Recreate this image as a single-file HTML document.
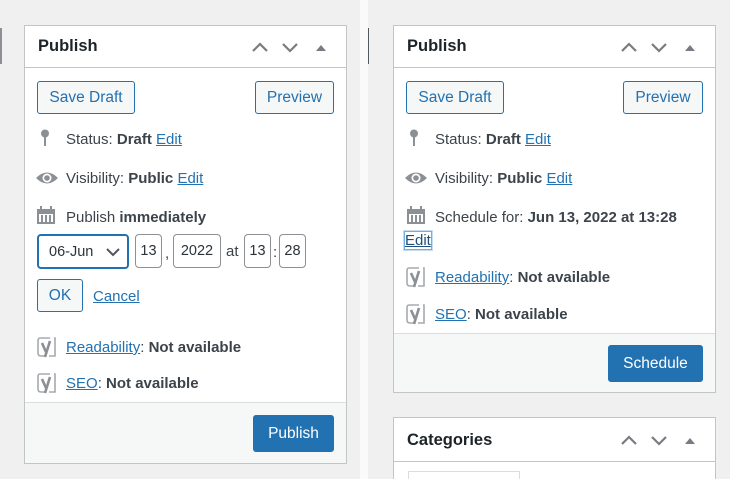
<!DOCTYPE html>
<html style="overflow:hidden;height:479px"><head><style>
*{box-sizing:border-box;margin:0;padding:0}
body{width:730px;height:479px;background:#f0f0f1;position:relative;overflow:hidden;font-family:"Liberation Sans",sans-serif;font-size:15px;color:#3c434a}
.a{position:absolute}
.panel{position:absolute;background:#fff;border:1px solid #c3c4c7}
.hdr{position:absolute;left:0;right:0;top:0;height:42px;border-bottom:1px solid #c3c4c7}
.hdr b{position:absolute;left:13px;top:11px;font-size:16.5px;color:#1d2327}
.foot{position:absolute;left:0;right:0;bottom:0;background:#f6f7f7;border-top:1px solid #dcdcde}
.btn{position:absolute;border:1px solid #2271b1;border-radius:3px;background:#f6f7f7;color:#2271b1;font-size:15.5px;display:flex;align-items:center;justify-content:center}
.pri{position:absolute;background:#2271b1;color:#fff;border-radius:3px;font-size:15.5px;display:flex;align-items:center;justify-content:center}
.t{position:absolute;white-space:nowrap;font-size:15px}
a{color:#2271b1;text-decoration:underline}
.inp{position:absolute;border:1px solid #8c8f94;border-radius:4px;font-size:14.5px;text-align:center;line-height:32px;height:34px;top:234px;color:#2c3338}
</style></head><body>
<div class="a" style="left:360px;top:0;width:8px;height:479px;background:#fafafa"></div>
<div class="a" style="left:0;top:28px;width:2px;height:36px;background:#8c8f94"></div>
<div class="a" style="left:368px;top:28px;width:1px;height:36px;background:#50575e"></div>

<svg width="0" height="0" style="position:absolute">
<defs>
<g id="ctl" fill="none" stroke="#787c82" stroke-width="2.2"><path d="M0 8 L7 1 L14 8"/><path d="M30 1 L37 8 L44 1"/><path d="M63 8 L68 2 L73 8Z" fill="#787c82" stroke="none"/></g>
<g id="pin" fill="#8c8f94"><circle cx="5" cy="4.5" r="4"/><rect x="4" y="6" width="2" height="11"/></g>
<g id="eye"><path d="M0 8 Q11 -3 22 8 Q11 19 0 8Z" fill="#8c8f94"/><circle cx="11" cy="8" r="4.5" fill="#fff"/><circle cx="11" cy="8" r="2.8" fill="#8c8f94"/></g>
<g id="cal" fill="#8c8f94"><rect x="0" y="3" width="18" height="15"/><rect x="3" y="0" width="2" height="5"/><rect x="13" y="0" width="2" height="5"/><rect x="2" y="8" width="14" height="8" fill="#fff"/><rect x="4" y="9" width="2" height="7"/><rect x="8" y="9" width="2" height="7"/><rect x="12" y="9" width="2" height="7"/></g>
<g id="yo"><path d="M3 1 H13 M3 1 Q1 1 1 4 V16 Q1 19 4 19 H9" fill="none" stroke="#a7aaad" stroke-width="1.6"/><path d="M17 1 L18 1 L18 19 L12 19" fill="none" stroke="#a7aaad" stroke-width="1.6"/><path d="M5 6 L9 15 M13 4 L8 20" fill="none" stroke="#8c8f94" stroke-width="2.6"/></g>
</defs></svg>

<!-- LEFT PANEL -->
<div class="panel" style="left:24px;top:25px;width:323px;height:439px">
  <div class="hdr"><b>Publish</b><svg class="a" style="left:227px;top:16px" width="80" height="11"><use href="#ctl" x="1" y="1"/></svg></div>
  <div class="foot" style="height:61px"></div>
</div>
<div class="btn" style="left:37px;top:81px;width:98px;height:33px">Save Draft</div>
<div class="btn" style="left:255px;top:81px;width:79px;height:33px">Preview</div>
<svg class="a" style="left:40px;top:129px" width="12" height="18"><use href="#pin"/></svg>
<div class="t" style="left:66px;top:131px">Status: <b>Draft</b> <a>Edit</a></div>
<svg class="a" style="left:36px;top:170px" width="24" height="17"><use href="#eye"/></svg>
<div class="t" style="left:66px;top:170px">Visibility: <b>Public</b> <a>Edit</a></div>
<svg class="a" style="left:37px;top:206px" width="19" height="19"><use href="#cal"/></svg>
<div class="t" style="left:66px;top:209px">Publish <b>immediately</b></div>
<div class="a" style="left:37px;top:234px;width:92px;height:35px;border:2px solid #2271b1;border-radius:4px;font-size:14.5px;color:#2c3338;padding:8px 0 0 10px">06-Jun<svg class="a" style="left:67px;top:12px" width="14" height="9"><path d="M1 1 L7 7 L13 1" fill="none" stroke="#50575e" stroke-width="2"/></svg></div>
<div class="inp" style="left:135px;width:27px">13</div>
<div class="t" style="left:165px;top:245px">,</div>
<div class="inp" style="left:173px;width:48px">2022</div>
<div class="t" style="left:226px;top:243px">at</div>
<div class="inp" style="left:244px;width:27px">13</div>
<div class="t" style="left:273px;top:244px">:</div>
<div class="inp" style="left:279px;width:27px">28</div>
<div class="btn" style="left:37px;top:279px;width:46px;height:33px">OK</div>
<div class="t" style="left:93px;top:288px"><a>Cancel</a></div>
<svg class="a" style="left:37px;top:337px" width="20" height="21"><use href="#yo"/></svg>
<div class="t" style="left:66px;top:339px"><a>Readability</a>: <b>Not available</b></div>
<svg class="a" style="left:37px;top:373px" width="20" height="21"><use href="#yo"/></svg>
<div class="t" style="left:66px;top:375px"><a>SEO</a>: <b>Not available</b></div>
<div class="pri" style="left:253px;top:415px;width:81px;height:37px">Publish</div>

<!-- RIGHT PANEL -->
<div class="panel" style="left:393px;top:25px;width:323px;height:368px">
  <div class="hdr"><b>Publish</b><svg class="a" style="left:227px;top:16px" width="80" height="11"><use href="#ctl" x="1" y="1"/></svg></div>
  <div class="foot" style="height:59px"></div>
</div>
<div class="btn" style="left:406px;top:81px;width:98px;height:33px">Save Draft</div>
<div class="btn" style="left:623px;top:81px;width:80px;height:33px">Preview</div>
<svg class="a" style="left:409px;top:129px" width="12" height="18"><use href="#pin"/></svg>
<div class="t" style="left:435px;top:131px">Status: <b>Draft</b> <a>Edit</a></div>
<svg class="a" style="left:405px;top:170px" width="24" height="17"><use href="#eye"/></svg>
<div class="t" style="left:435px;top:170px">Visibility: <b>Public</b> <a>Edit</a></div>
<svg class="a" style="left:407px;top:206px" width="19" height="19"><use href="#cal"/></svg>
<div class="t" style="left:435px;top:209px">Schedule for: <b>Jun 13, 2022 at 13:28</b></div>
<div class="t" style="left:405px;top:232px;outline:1px solid #72aee6;box-shadow:0 0 0 2px #c5dcf0"><a style="color:#1d4f7a">Edit</a></div>
<svg class="a" style="left:406px;top:267px" width="20" height="21"><use href="#yo"/></svg>
<div class="t" style="left:435px;top:269px"><a>Readability</a>: <b>Not available</b></div>
<svg class="a" style="left:406px;top:304px" width="20" height="21"><use href="#yo"/></svg>
<div class="t" style="left:435px;top:306px"><a>SEO</a>: <b>Not available</b></div>
<div class="pri" style="left:608px;top:345px;width:95px;height:37px">Schedule</div>

<div class="panel" style="left:393px;top:417px;width:323px;height:70px">
  <div class="hdr" style="height:44px"><b style="top:13px">Categories</b><svg class="a" style="left:227px;top:17px" width="80" height="11"><use href="#ctl" x="1" y="1"/></svg></div>
</div>
<div class="a" style="left:408px;top:471px;width:112px;height:12px;border:1px solid #dcdcde;border-bottom:none"></div>
</body></html>
